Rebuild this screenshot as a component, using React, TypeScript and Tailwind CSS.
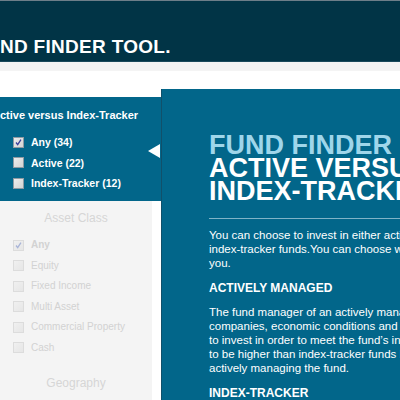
import React from "react";

function Box({ checked, faded }: { checked?: boolean; faded?: boolean }) {
  return (
    <span
      className={
        "relative inline-block h-[11px] w-[11px] shrink-0 border " +
        (faded
          ? "border-[#dcdcdc] bg-gradient-to-br from-[#f0f0f0] to-[#e6e6e6]"
          : "border-[#8f9aa3] bg-gradient-to-br from-[#ececec] to-[#d4d4d4]")
      }
    >
      {checked ? (
        <svg viewBox="0 0 11 11" className="absolute inset-0 h-full w-full">
          <path
            d="M2.5 5.5 L4.5 8 L8.5 2"
            fill="none"
            stroke={faded ? "#a8b4d8" : "#3a3f9a"}
            strokeWidth="1.6"
          />
        </svg>
      ) : null}
    </span>
  );
}

function Option({ label, checked, faded, bold }: { label: string; checked?: boolean; faded?: boolean; bold?: boolean }) {
  return (
    <div className="flex h-[20.5px] items-center gap-[7px] pl-[13px]">
      <Box checked={checked} faded={faded} />
      <span
        className={
          "leading-none whitespace-nowrap " +
          (faded ? "text-[10px] text-[#d2d2d2] " : "text-[10.5px] text-white ") +
          (bold ? "font-bold" : "")
        }
      >
        {label}
      </span>
    </div>
  );
}

export default function App() {
  return (
    <div className="h-[400px] w-[400px] overflow-hidden bg-white font-['Liberation_Sans',Arial,sans-serif]">
      <header className="h-[62px] border-t border-b border-t-[#6d7e89] border-b-[#1b4a5c] bg-[#013446] pt-[35px]">
        <div className="ml-[-26px] whitespace-nowrap text-[19px] font-bold leading-[22px] tracking-[0.3px] text-white">
          FUND FINDER TOOL.
        </div>
      </header>
      <div className="h-[9px] bg-[#f4f4f4]" />
      <div className="h-[18px] bg-white" />

      <div className="flex h-[311px]">
        <div className="flex w-[161px] shrink-0 flex-col">
          <div className="h-[8px] bg-white" />
          <div className="relative h-[104px] bg-[#02668a]">
            <div className="ml-[-8px] pt-[11px] whitespace-nowrap text-[11px] font-bold leading-[14px] text-white">
              Active versus Index-Tracker
            </div>
            <div className="mt-[10px]">
              <Option label="Any (34)" checked bold />
              <Option label="Active (22)" bold />
              <Option label="Index-Tracker (12)" bold />
            </div>
            <div className="absolute right-[1px] top-[47px] h-0 w-0 border-y-[7px] border-r-[12px] border-y-transparent border-r-white" />
          </div>
          <div className="flex flex-1">
            <div className="w-[152px] bg-[#f4f4f4]">
              <div className="pt-[9px] text-center text-[12px] leading-[16px] text-[#d6d6d6]">Asset Class</div>
              <div className="mt-[9px]">
                <Option label="Any" checked faded bold />
                <Option label="Equity" faded />
                <Option label="Fixed Income" faded />
                <Option label="Multi Asset" faded />
                <Option label="Commercial Property" faded />
                <Option label="Cash" faded />
              </div>
              <div className="mt-[17px] text-center text-[12px] leading-[16px] text-[#d6d6d6]">Geography</div>
            </div>
            <div className="flex-1 bg-white" />
          </div>
        </div>

        <div className="min-w-0 flex-1 overflow-hidden border-l border-[#11506a] bg-[#02668a] pl-[47px] pt-[45px]">
          <div className="w-[300px] whitespace-nowrap text-[27px] font-bold leading-[23px] text-[#9fd6ea]">FUND FINDER</div>
          <div className="w-[300px] whitespace-nowrap text-[27px] font-bold leading-[23px] text-white">
            ACTIVE VERSUS
            <br />
            INDEX-TRACKER
          </div>
          <div className="mt-[15px] h-px w-[200px] bg-[#7fb3c7]" />
          <div className="mt-[9px] w-[300px] whitespace-nowrap text-[11.5px] leading-[14px] text-white">
            <p>You can choose to invest in either actively managed or</p>
            <p>index-tracker funds.You can choose whichever suits</p>
            <p>you.</p>
            <p className="mt-[11px] text-[12px] font-bold">ACTIVELY MANAGED</p>
            <p className="mt-[10px]">The fund manager of an actively managed fund researches</p>
            <p>companies, economic conditions and market trends to decide</p>
            <p>to invest in order to meet the fund’s investment objective.</p>
            <p>to be higher than index-tracker funds because of the cost of</p>
            <p>actively managing the fund.</p>
            <p className="mt-[11px] text-[12px] font-bold">INDEX-TRACKER</p>
          </div>
        </div>
      </div>
    </div>
  );
}
